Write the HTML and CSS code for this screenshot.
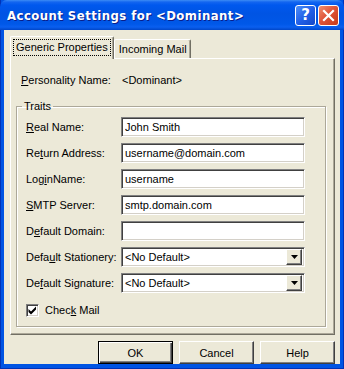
FILE: index.html
```html
<!DOCTYPE html>
<html lang="en">
<head>
  <meta charset="UTF-8" />
  <title>Account Settings for &lt;Dominant&gt;</title>
  <link rel="stylesheet" href="styles.css">
</head>
<body>
  <div class="window">
    <div class="titlebar">
      <span class="title">Account Settings for &lt;Dominant&gt;</span>
      <div class="caption-buttons">
        <span class="cap-btn help">?</span>
        <span class="cap-btn close">
          <svg width="13" height="13" viewBox="0 0 13 13"><path d="M2 2 L11 11 M11 2 L2 11" stroke="#fff" stroke-width="2.2" stroke-linecap="square"/></svg>
        </span>
      </div>
    </div>

    <div class="client">
      <div class="tabs">
        <div class="tab active"><span class="focus">Generic Properties</span></div>
        <div class="tab">Incoming Mail</div>
      </div>

      <div class="panel">
        <div class="personality">
          <span class="plabel"><u>P</u>ersonality Name:</span>
          <span>&lt;Dominant&gt;</span>
        </div>

        <fieldset class="group">
          <legend>Traits</legend>
          <div class="form-grid">
            <label for="realName"><u>R</u>eal Name:</label>
            <input type="text" id="realName" value="John Smith" />

            <label for="returnAddr">Re<u>t</u>urn Address:</label>
            <input type="text" id="returnAddr" value="username@domain.com" />

            <label for="loginName">Log<u>i</u>nName:</label>
            <input type="text" id="loginName" value="username" />

            <label for="smtp"><u>S</u>MTP Server:</label>
            <input type="text" id="smtp" value="smtp.domain.com" />

            <label for="domain">D<u>e</u>fault Domain:</label>
            <input type="text" id="domain" value="" />

            <label>Defa<u>u</u>lt Stationery:</label>
            <div class="combo">
              <span class="combo-text">&lt;No Default&gt;</span>
              <span class="drop-btn"><svg width="7" height="4" viewBox="0 0 7 4"><path d="M0 0 H7 L3.5 4 Z" fill="#000"/></svg></span>
            </div>

            <label>De<u>f</u>ault Signature:</label>
            <div class="combo">
              <span class="combo-text">&lt;No Default&gt;</span>
              <span class="drop-btn"><svg width="7" height="4" viewBox="0 0 7 4"><path d="M0 0 H7 L3.5 4 Z" fill="#000"/></svg></span>
            </div>

            <div class="check-row">
              <span class="checkbox"><svg width="9" height="9" viewBox="0 0 9 9"><path d="M0.5 3 L3 5.5 L8 0.5 V3.5 L3 8.5 L0.5 6 Z" fill="#000"/></svg></span>
              <span>Chec<u>k</u> Mail</span>
            </div>
          </div>
        </fieldset>
      </div>

      <div class="buttons">
        <button class="btn default">OK</button>
        <button class="btn">Cancel</button>
        <button class="btn">Help</button>
      </div>
    </div>
  </div>
</body>
</html>
```

FILE: styles.css
```css
body {
  margin: 0;
  font-family: "Liberation Sans", Arial, sans-serif;
  font-size: 11px;
  color: #000;
}
u {
  text-decoration: underline;
  text-underline-offset: 1px;
}
.window {
  width: 344px;
  height: 369px;
  box-sizing: border-box;
  display: flex;
  flex-direction: column;
  background: #0054e3;
  border: 1px solid #0032b8;
  border-top: none;
}
.titlebar {
  height: 30px;
  flex: none;
  display: flex;
  align-items: center;
  justify-content: space-between;
  padding: 0 5px 0 7px;
  margin: 0 -1px;
  background: linear-gradient(to bottom, #3d8cf5 0, #1466f0 2px, #0058ee 5px, #0054e3 14px, #0058e8 24px, #0a5ff0 27px, #0046c8 30px);
  border-radius: 7px 7px 0 0;
}
.title {
  color: #fff;
  font-family: "DejaVu Sans Condensed", "DejaVu Sans", sans-serif;
  font-weight: bold;
  font-size: 13px;
  text-shadow: 1px 1px 0 #0a1e8a;
  letter-spacing: 0.45px;
}
.caption-buttons {
  display: flex;
  gap: 2px;
}
.cap-btn {
  width: 21px;
  height: 21px;
  box-sizing: border-box;
  border: 1px solid #fff;
  border-radius: 3px;
  display: flex;
  align-items: center;
  justify-content: center;
  color: #fff;
}
.help {
  background: linear-gradient(135deg, #4d8ff8 0, #2260e8 50%, #1447c8 100%);
  font-family: "DejaVu Sans", sans-serif;
  font-weight: bold;
  font-size: 15px;
}
.close {
  background: linear-gradient(135deg, #f09070 0, #e0553a 45%, #c63a18 100%);
}
.client {
  flex: 1;
  margin: 0 3px 4px;
  background: #ece9d8;
  padding: 6px 5px 0 6px;
  display: flex;
  flex-direction: column;
}
.tabs {
  display: flex;
  align-items: flex-end;
  height: 22px;
}
.tab {
  height: 19px;
  box-sizing: border-box;
  padding: 3px 3px 0 4px;
  border-top: 1px solid #fff;
  border-left: 1px solid #fff;
  border-right: 1px solid #716f64;
  box-shadow: inset -1px 0 #aca899;
  border-radius: 2px 2px 0 0;
  background: #ece9d8;
  white-space: nowrap;
}
.tab.active {
  height: 23px;
  padding: 3px 3px 0 3px;
  margin-bottom: -1px;
  position: relative;
  z-index: 1;
}
.focus {
  display: inline-block;
  padding: 1px 2px 2px;
  outline: 1px dotted #000;
  outline-offset: 0;
}
.panel {
  border-top: 1px solid #fff;
  border-left: 1px solid #fff;
  border-right: 1px solid #716f64;
  border-bottom: 1px solid #716f64;
  box-shadow: inset -1px -1px #aca899;
  padding: 15px 8px 7px 10px;
}
.personality {
  display: flex;
  line-height: 13px;
}
.plabel {
  width: 101px;
}
.group {
  margin: 13px 0 0 -5px;
  padding: 4px 7px 7px 9px;
  border: 1px solid #aca899;
  box-shadow: inset 1px 1px #fff, 1px 1px #fff;
}
.group legend {
  padding: 0 2px;
  margin-left: -4px;
  line-height: 13px;
}
.form-grid {
  display: grid;
  grid-template-columns: 95px 184px;
  grid-auto-rows: 20px;
  row-gap: 6px;
  align-items: center;
}
.form-grid label {
  line-height: 13px;
}
.form-grid input {
  height: 20px;
  width: 184px;
  box-sizing: border-box;
  margin: 0;
  padding: 0 2px 0 3px;
  border-style: solid;
  border-width: 1px;
  border-color: #808080 #fff #fff #808080;
  box-shadow: inset 1px 1px #404040, inset -1px -1px #d4d0c8;
  font-family: inherit;
  font-size: 11px;
  color: #000;
  background: #fff;
  outline: none;
}
.combo {
  height: 20px;
  box-sizing: border-box;
  border-style: solid;
  border-width: 1px;
  border-color: #808080 #fff #fff #808080;
  box-shadow: inset 1px 1px #404040, inset -1px -1px #d4d0c8;
  background: #fff;
  display: flex;
  align-items: center;
  padding: 2px;
}
.combo-text {
  flex: 1;
  padding-left: 1px;
}
.drop-btn {
  width: 16px;
  height: 16px;
  box-sizing: border-box;
  background: #ece9d8;
  border-style: solid;
  border-width: 1px;
  border-color: #fff #404040 #404040 #fff;
  box-shadow: inset -1px -1px #808080;
  display: flex;
  align-items: center;
  justify-content: center;
}
.check-row {
  grid-column: 1 / 3;
  display: flex;
  align-items: center;
  gap: 6px;
  margin-top: 2px;
  height: 13px;
}
.checkbox {
  width: 13px;
  height: 13px;
  box-sizing: border-box;
  border-style: solid;
  border-width: 1px;
  border-color: #808080 #fff #fff #808080;
  box-shadow: inset 1px 1px #404040, inset -1px -1px #d4d0c8;
  background: #fff;
  display: flex;
  align-items: center;
  justify-content: center;
}
.buttons {
  display: flex;
  justify-content: flex-end;
  gap: 6px;
  margin-top: 6px;
}
.btn {
  width: 75px;
  height: 23px;
  box-sizing: border-box;
  margin: 0;
  padding: 0;
  background: #ece9d8;
  border-style: solid;
  border-width: 1px;
  border-color: #fff #404040 #404040 #fff;
  box-shadow: inset -1px -1px #808080;
  font-family: inherit;
  font-size: 11px;
  color: #000;
}
.btn.default {
  border: 1px solid #000;
  box-shadow: inset 1px 1px #fff, inset -1px -1px #404040, inset -2px -2px #808080;
}
```
